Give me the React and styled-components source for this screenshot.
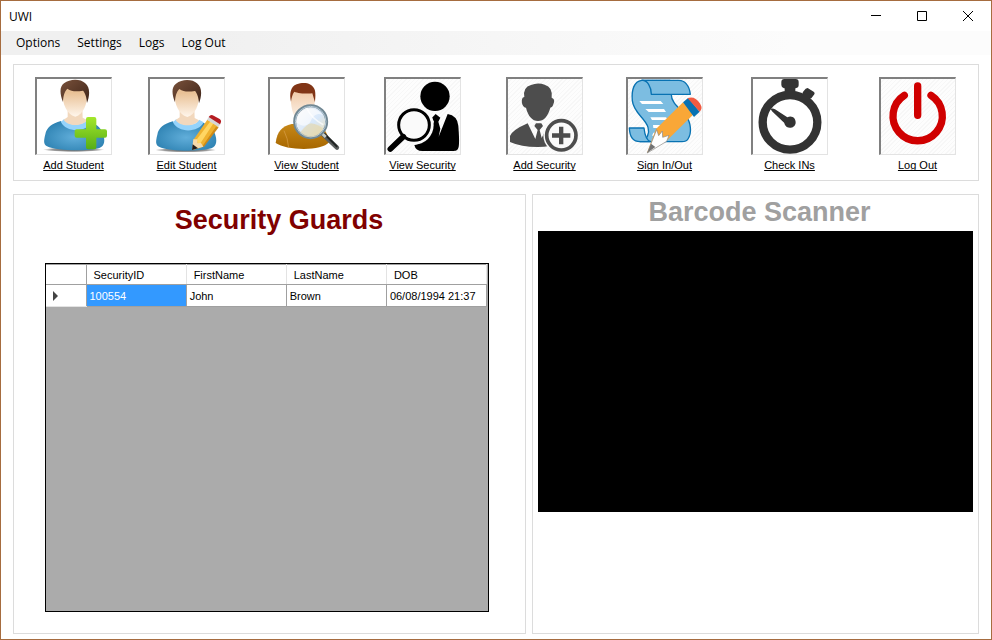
import React from "react";
import styled, { createGlobalStyle } from "styled-components";

const GlobalStyle = createGlobalStyle`
  * { box-sizing: border-box; }
  body { margin: 0; background: #fff; font-family: "Liberation Sans", Arial, sans-serif; font-size: 11px; color: #000; }
  button { font: inherit; color: inherit; background: none; border: 0; padding: 0; }
`;

const Window = styled.div`
  min-height: 100vh;
  display: flex;
  flex-direction: column;
  border: 1px solid #a66c3f;
  background: #fff;
`;

const TitleBar = styled.header`
  height: 30px;
  display: flex;
  align-items: center;
  justify-content: space-between;
  padding-left: 8px;
  font: 12px "Open Sans", "Noto Sans", sans-serif;
`;

const WindowTitle = styled.h1`
  margin: 0;
  font: inherit;
`;

const Captions = styled.div`
  display: flex;
`;

const CaptionButton = styled.button`
  width: 46px;
  height: 30px;
  display: grid;
  place-items: center;
`;

const MenuBar = styled.nav`
  height: 24px;
  display: flex;
  align-items: center;
  gap: 1px;
  padding-left: 7px;
  background: linear-gradient(90deg, #f0f0f0 20%, #fcfcfc 80%);
`;

const MenuItem = styled.button`
  padding: 0 8px;
  font: 12px/20px "Open Sans", "Noto Sans", sans-serif;
`;

const Content = styled.main`
  flex: 1;
  display: flex;
  flex-direction: column;
  gap: 13px;
  padding: 9px 12px 5px;
`;

const Toolbar = styled.section`
  display: grid;
  grid-template-columns: 113fr 120fr 116fr 122fr 120fr 125fr 128fr 77px;
  height: 117px;
  padding: 12px 22px 0 21px;
  border: 1px solid #dcdcdc;
`;

const Tool = styled.button`
  width: 77px;
  display: flex;
  flex-direction: column;
  align-items: center;
  justify-self: start;
  align-self: start;
  gap: 4px;
`;

const Picture = styled.span`
  display: block;
  width: 77px;
  height: 78px;
  border: solid;
  border-width: 2px 1px 1px 2px;
  border-color: #808080 #e3e3e3 #e3e3e3 #808080;
  background: ${(p) =>
    p.$hatched
      ? "repeating-linear-gradient(135deg, #fdfdfd 0 2px, #f7f7f7 2px 3px)"
      : "#fff"};

  svg { display: block; width: 100%; height: 100%; }
`;

const ToolLabel = styled.span`
  line-height: 13px;
  white-space: nowrap;
  text-decoration: underline;
  text-decoration-skip-ink: none;
  text-underline-offset: 1px;
`;

const Panels = styled.div`
  flex: 1;
  display: grid;
  grid-template-columns: 513fr 447fr;
  gap: 6px;
`;

const Panel = styled.section`
  display: flex;
  flex-direction: column;
  border: 1px solid #dcdcdc;
  padding: ${(p) => p.$padding};
`;

const Heading = styled.h2`
  margin: 0 0 ${(p) => p.$gap}px;
  padding-left: ${(p) => p.$indent}px;
  font-size: 27px;
  line-height: 32px;
  text-align: center;
  color: ${(p) => p.$color};
`;

const DataGrid = styled.div`
  flex: 1;
  padding-right: 1px;
  border: 1px solid #000;
  background: #ababab;
  overflow: hidden;
`;

const Table = styled.table`
  width: 100%;
  table-layout: fixed;
  border-collapse: collapse;
  background: #fff;
  border-top: 1px solid #a0a0a0;
`;

const HeadCell = styled.th`
  width: ${(p) => p.$width};
  height: 20px;
  padding: 0 0 0 7px;
  font-weight: normal;
  text-align: left;
  border-right: 1px solid ${(p) => (p.$marker ? "#a0a0a0" : "#e3e3e3")};
  border-bottom: 1px solid #a0a0a0;
`;

const Cell = styled.td`
  height: 22px;
  padding: 0 0 0 3px;
  white-space: nowrap;
  border-right: 1px solid #a0a0a0;
  border-bottom: 1px solid #a0a0a0;
  background: ${(p) => (p.$selected ? "#3399ff" : "#fff")};
  color: ${(p) => (p.$selected ? "#fff" : "#000")};
`;

const RowMarker = styled(HeadCell)`
  height: 22px;
  border-bottom-color: #e3e3e3;

  svg { display: block; }
`;

const Video = styled.div`
  aspect-ratio: 435 / 281;
  background: #000;
`;

function Student({ id }) {
  return (
    <>
      <defs>
        <linearGradient id={`${id}-face`} x2="0" y2="1">
          <stop offset="0.2" stopColor="#e9c196" />
          <stop offset="1" stopColor="#fff6ec" />
        </linearGradient>
        <linearGradient id={`${id}-hair`} x2="1" y2="1">
          <stop offset="0" stopColor="#79513b" />
          <stop offset="1" stopColor="#3e2418" />
        </linearGradient>
        <radialGradient id={`${id}-shirt`} cx=".5" cy=".55" r=".55">
          <stop offset="0" stopColor="#61aeda" />
          <stop offset="1" stopColor="#3084b4" />
        </radialGradient>
        <radialGradient id={`${id}-shadow`}>
          <stop offset="0" stopColor="#555" />
          <stop offset=".7" stopColor="#999" />
          <stop offset="1" stopColor="#fff" />
        </radialGradient>
      </defs>
      <ellipse cx="110" cy="212" rx="92" ry="7" fill={`url(#${id}-shadow)`} />
      <path d="M72 126c-28 8-43 19-47 40-5 20-6 30 5 36 28 14 120 16 157 5 18-7 17-26 11-43-6-20-24-32-50-38-10 27-64 25-76 0z" fill={`url(#${id}-shirt)`} />
      <path d="M82 119c7 22 58 24 68 2l14 8c-15 32-77 33-92 0z" fill="#94d3fb" />
      <path d="M92 88h44l1 28 13 7c-12 20-58 20-70-1l12-8z" fill="#f2d8bd" />
      <path d="M76 44c1 30 12 61 39 69 25-8 35-38 36-66L139 24 91 23z" fill={`url(#${id}-face)`} />
      <path d="M78 69c-9-23-12-45 3-56C99-2 131-1 144 12c17 13 14 39 6 60-1-18-6-31-12-37-20 3-34 3-47-6-9 10-12 21-13 40z" fill={`url(#${id}-hair)`} />
    </>
  );
}

const AddStudentIcon = () => (
  <svg viewBox="0 0 222 225" aria-hidden="true">
    <defs>
      <linearGradient id="plus" x2="0" y2="1">
        <stop offset="0" stopColor="#a4e72b" />
        <stop offset="1" stopColor="#55ad16" />
      </linearGradient>
    </defs>
    <Student id="add" />
    <path d="M153 114h19q6 0 6 6v31h26q6 0 6 6v13q0 6-6 6h-26v29q0 6-6 6h-19q-6 0-6-6v-29h-28q-6 0-6-6v-13q0-6 6-6h28v-31q0-6 6-6z" fill="url(#plus)" />
  </svg>
);

const EditStudentIcon = () => (
  <svg viewBox="0 0 222 225" aria-hidden="true">
    <g transform="translate(-3 1)"><Student id="edit" /></g>
    <path d="M130 183l42-61 33 18-46 63-28 9z" fill="#efb12f" />
    <path d="M139 183l43-57 9 6-43 66z" fill="#ffd663" />
    <path d="M156 203l42-60 8 2-44 58z" fill="#ce8a18" />
    <path d="M130 181l-4 31 34-9-7-11-10 1-2-12z" fill="#f5d9aa" />
    <path d="M128 196l-2 17 18-5z" fill="#211b19" />
    <path d="M171 122l6-9 35 21-7 10z" fill="#d6d6d6" />
    <path d="M176 114q6-9 15-4l18 10q8 5 1 16z" fill="#b51c22" />
  </svg>
);

const ViewStudentIcon = () => (
  <svg viewBox="60 57 222 225" aria-hidden="true">
    <defs>
      <linearGradient id="viewface" x2="0" y2="1"><stop stopColor="#efc7a3" /><stop offset=".8" stopColor="#fff9f4" /></linearGradient>
      <linearGradient id="coat" x2="0" y2="1"><stop stopColor="#c78818" /><stop offset="1" stopColor="#a76700" /></linearGradient>
      <linearGradient id="lens" x2="1" y2="1"><stop stopColor="#fffaf5" /><stop offset=".55" stopColor="#d8e8fa" /><stop offset="1" stopColor="#eee0b5" /></linearGradient>
    </defs>
    <path d="M77 249c4-34 19-50 48-57h61c31 5 47 20 51 55-21 27-127 25-160 2z" fill="url(#coat)" />
    <path d="M102 212q12 23 14 52" fill="none" stroke="#d9a04d" strokeWidth="2" />
    <path d="M122 104c0 35 6 59 15 68l-5 27 26 16 28-18-5-28c8-13 14-36 15-63l-20-18-43 1z" fill="url(#viewface)" />
    <path d="M123 125c-5-23-2-45 17-52 22-9 46-3 52 12 6 10 4 25 3 42l-8-27c-14 2-43 0-54-5-6 8-8 17-10 30z" fill="#813516" />
    <path d="M219 223l42 40" stroke="#595d5d" strokeWidth="13" strokeLinecap="round" />
    <path d="M224 222l36 37" stroke="#202423" strokeWidth="6" strokeLinecap="round" />
    <path d="M215 219l12 12" stroke="#c4cbc7" strokeWidth="9" />
    <circle cx="182" cy="185" r="48" fill="url(#lens)" stroke="#708793" strokeWidth="9" />
    <circle cx="182" cy="185" r="46" fill="none" stroke="#b8ccda" strokeWidth="3" />
    <path d="M139 187c3-28 20-41 43-41 15 0 29 8 36 19-20-10-31 7-36 19-9 18-28 16-43 3z" fill="#fff" opacity=".6" />
    <path d="M151 216q20-24 32-26 23 4 36 16-12 24-37 25-18 0-31-15z" fill="#e6d49f" opacity=".55" />
    <path d="M170 144q13 30 50 50" stroke="#fff" strokeWidth="5" opacity=".7" fill="none" />
  </svg>
);

const ViewSecurityIcon = () => (
  <svg viewBox="48 57 222 225" aria-hidden="true">
    <circle cx="195" cy="109" r="44" fill="#000" />
    <path d="M184 203l8-18-6-12 11-11 14 11-6 12 6 21-5 24 27-68q29 5 32 35c2 27 4 58 0 67-3 9-10 9-20 9h-88q-20 0-24-18 35-7 51-52z" fill="#000" />
    <circle cx="132" cy="195" r="59" fill="#fafafa" />
    <circle cx="132" cy="195" r="46" fill="none" stroke="#000" strokeWidth="9" />
    <path d="M100 230l-39 37" stroke="#000" strokeWidth="17" strokeLinecap="round" />
  </svg>
);

const AddSecurityIcon = () => (
  <svg viewBox="54 57 222 225" aria-hidden="true">
    <path d="M103 111q-5-29 20-36 20-9 41-1 25 7 21 39 12 4 5 20-3 10-9 10c-7 26-20 40-37 40s-30-15-36-40c-13 1-18-31-5-32z" fill="#4d4d4d" />
    <path d="M113 190l23 47 7-27-10-12 5-8h16l5 8-10 12 6 24 20-42q39 15 42 30v24q-34 15-74 15-50 0-83-15v-18q7-18 53-38z" fill="#4d4d4d" />
    <circle cx="214" cy="226" r="54" fill="#fafafa" />
    <circle cx="214" cy="226" r="44" fill="#fafafa" stroke="#4d4d4d" strokeWidth="11" />
    <path d="M207 200h13v20h21v13h-21v20h-13v-20h-21v-13h21z" fill="#4d4d4d" />
  </svg>
);

const SignIcon = () => (
  <svg viewBox="54 57 222 225" aria-hidden="true">
    <g fill="#7cbde1" stroke="#0872b2" strokeWidth="4" strokeLinejoin="round">
      <path d="M95 61h85c10 18 6 34 4 43-1 23 26 42 44 64 15 20 18 50 6 69-3 6-8 8-19 8H91c22-5 28-27 23-43-7-27-44-44-47-80-3-32 5-58 28-61z" />
      <path d="M95 61c17-2 29 20 29 42h117c-3-28-18-42-34-42z" />
      <path d="M58 204h44q4 37 20 41H90c-21 0-31-15-32-41z" />
    </g>
    <path d="M88 123h64l8 9H96zM106 147h56l6 9h-52zM121 172h47l7 8h-49zM129 195h32l7 9h-38zM130 218h30v9h-34z" fill="#fff" />
    <path d="M138 207l81-80 33 34-82 81-59 37z" fill="#f9a737" />
    <path d="M140 209l6 18 11-14 1 19 19-6-7 18-58 35z" fill="#fff" stroke="#888" strokeWidth="2" />
    <path d="M123 251l13 10-24 17z" fill="#737373" />
    <path d="M219 127l16-14 34 42-17 16z" fill="#0872b2" />
    <path d="M233 115c13-6 27 0 36 14 8 12 7 19 0 26z" fill="#f15b42" />
  </svg>
);

const StopwatchIcon = () => (
  <svg viewBox="69 57 222 225" aria-hidden="true">
    <g fill="#333">
      <circle cx="180" cy="187" r="82" fill="#fff" stroke="#333" strokeWidth="25" />
      <path d="M163 57h34q9 0 9 9v9q0 8-9 10h-1v17h-32V85h-2q-8-2-8-10v-9q0-9 9-9zM227 86l6-2 18 11q5 4 2 8l-9 12-6 1-9 14-21-14 11-14-1-5zM122 147q6-3 13 1l37 24c14-7 26 3 25 17-2 17-27 20-33 4-1-4-1-4-4-7l-34-32z" />
    </g>
  </svg>
);

const PowerIcon = () => (
  <svg viewBox="93 237 222 225" aria-hidden="true">
    <g fill="none" stroke="#d00000" strokeWidth="22" strokeLinecap="round">
      <path d="M163 286a74 74 0 1 0 80 0M203 258v88" />
    </g>
  </svg>
);

const tools = [
  { label: "Add Student", Icon: AddStudentIcon },
  { label: "Edit Student", Icon: EditStudentIcon },
  { label: "View Student", Icon: ViewStudentIcon },
  { label: "View Security", Icon: ViewSecurityIcon, hatched: true },
  { label: "Add Security", Icon: AddSecurityIcon, hatched: true },
  { label: "Sign In/Out", Icon: SignIcon, hatched: true },
  { label: "Check INs", Icon: StopwatchIcon },
  { label: "Log Out", Icon: PowerIcon, hatched: true },
];

const captions = [
  { label: "Minimize", d: "M0 4.5h10" },
  { label: "Maximize", d: "M.5.5h9v9h-9z" },
  { label: "Close", d: "M0 0l10 10M10 0L0 10" },
];

const columns = ["SecurityID", "FirstName", "LastName", "DOB"];
const guards = [["100554", "John", "Brown", "06/08/1994 21:37"]];

export default function App() {
  return (
    <>
      <GlobalStyle />
      <Window>
        <TitleBar>
          <WindowTitle>UWI</WindowTitle>
          <Captions>
            {captions.map(({ label, d }) => (
              <CaptionButton key={label} type="button" aria-label={label}>
                <svg width="10" height="10" viewBox="0 0 10 10" fill="none" stroke="#000"><path d={d} /></svg>
              </CaptionButton>
            ))}
          </Captions>
        </TitleBar>
        <MenuBar>
          {["Options", "Settings", "Logs", "Log Out"].map((item) => (
            <MenuItem key={item} type="button">{item}</MenuItem>
          ))}
        </MenuBar>
        <Content>
          <Toolbar>
            {tools.map(({ label, Icon, hatched }) => (
              <Tool key={label} type="button">
                <Picture $hatched={hatched}><Icon /></Picture>
                <ToolLabel>{label}</ToolLabel>
              </Tool>
            ))}
          </Toolbar>
          <Panels>
            <Panel $padding="9px 36px 21px 31px">
              <Heading $color="#800000" $gap={27} $indent={24}>Security Guards</Heading>
              <DataGrid>
                <Table>
                  <thead>
                    <tr>
                      <HeadCell $width="40px" $marker aria-label="Current row" />
                      {columns.map((name) => <HeadCell key={name} scope="col">{name}</HeadCell>)}
                    </tr>
                  </thead>
                  <tbody>
                    {guards.map((guard) => (
                      <tr key={guard[0]}>
                        <RowMarker as="th" scope="row" $marker aria-label="Selected">
                          <svg width="5" height="10" viewBox="0 0 5 10"><path d="M0 0l5 5-5 5z" fill="#444" /></svg>
                        </RowMarker>
                        {guard.map((value, i) => <Cell key={value} $selected={i === 0}>{value}</Cell>)}
                      </tr>
                    ))}
                  </tbody>
                </Table>
              </DataGrid>
            </Panel>
            <Panel $padding="1px 5px 0">
              <Heading $color="#a0a0a0" $gap={3} $indent={8}>Barcode Scanner</Heading>
              <Video role="img" aria-label="Camera preview" />
            </Panel>
          </Panels>
        </Content>
      </Window>
    </>
  );
}
